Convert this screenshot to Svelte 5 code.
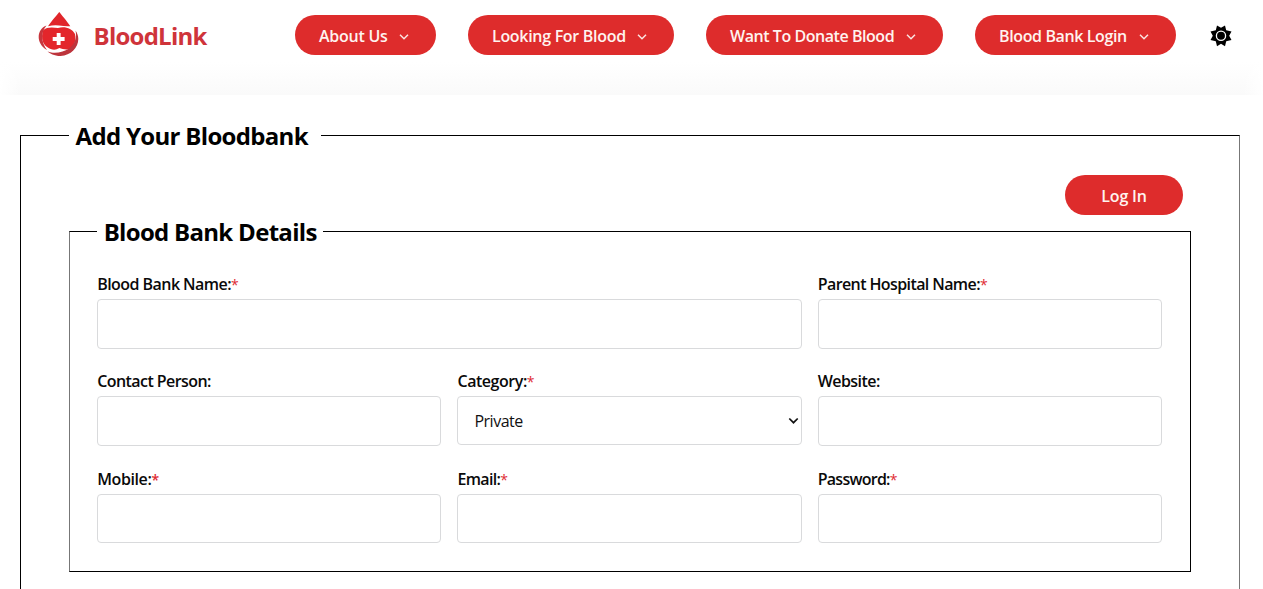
<script>
  const menus = [
    { label: 'About Us', width: 141, spacing: -0.25 },
    { label: 'Looking For Blood', width: 206, spacing: -0.3 },
    { label: 'Want To Donate Blood', width: 237, spacing: -0.45 },
    { label: 'Blood Bank Login', width: 200.5, spacing: -0.38 }
  ];

  const fields = [
    { id: 'name', label: 'Blood Bank Name:', required: true, wide: true, spacing: -0.55 },
    { id: 'hospital', label: 'Parent Hospital Name:', required: true, spacing: -0.6 },
    { id: 'contact', label: 'Contact Person:', spacing: -0.57 },
    { id: 'category', label: 'Category:', required: true, options: ['Private', 'Government'], spacing: -0.45 },
    { id: 'website', label: 'Website:', spacing: -0.55 },
    { id: 'mobile', label: 'Mobile:', required: true, boldMark: true, spacing: -0.4 },
    { id: 'email', label: 'Email:', required: true, spacing: -0.65 },
    { id: 'password', label: 'Password:', required: true, type: 'password', spacing: -0.75 }
  ];
</script>

<div class="page">
  <header>
    <div class="brand">
      <svg class="logo" width="42" height="46" viewBox="0 0 42 46">
        <path d="M21.300 0C19.500 2.500 13.500 9 10 14.200Q16 12.800 21 13.500Q27 14.500 32.300 14.200C29 9 23 2.500 21.300 0Z" fill="#e0262b" />
        <path d="M5 18.500C9 14.500 15 15.500 20 16C27 14 34 16.500 37 22C38.500 29 36 33.500 32.500 37C28 38 24 37 21.500 36L18 37.500C12.500 38.500 7 34.500 5 30C3.500 26 4 22 5 18.500Z" fill="#e3262b" />
        <path d="M8.500 13.500C-1 17-3 31 9 38C3.500 31 2 21 8.500 13.500Z" fill="#c7353c" />
        <path d="M37.500 18.500C45 29 36.500 43.500 22.500 44C16 44 12 41.500 9.500 39.500C15 41.500 19.500 41 24.500 39.500C33.500 37 40 29 37.500 18.500Z" fill="#bd343c" />
        <path d="M18.700 21h3.900v4h4v3.900h-4v4h-3.900v-4h-4V25h4z" fill="#fff" />
      </svg>
      <span class="brand-name">BloodLink</span>
    </div>
    <nav>
      {#each menus as menu}
        <button class="pill" style:width="{menu.width}px">
          <span style:letter-spacing="{menu.spacing}px">{menu.label}</span>
          <svg width="10" height="8" viewBox="0 0 10 8"><path d="M1 1.800 5 5.800 9 1.800" fill="none" stroke="#fbe5e2" stroke-width="1.500" /></svg>
        </button>
      {/each}
    </nav>
    <button class="theme" aria-label="Theme">
      <svg width="22" height="22" viewBox="0 0 22 22">
        <path d="M11 2.800 15 .5 16.200 5.300 21.500 6.500 19.200 10.700 21.500 15 16.200 16.200 15 21.200 11 18.800 7 21.200 5.800 16.200 .5 15 2.800 10.700 .5 6.500 5.800 5.300 7 .5Z" fill="#000" />
        <circle cx="11" cy="10.800" r="4.600" fill="#000" stroke="#fff" stroke-width="1.300" />
      </svg>
    </button>
  </header>

  <main>
    <fieldset class="outer">
      <legend>Add Your Bloodbank</legend>
      <div class="actions"><button class="pill login">Log In</button></div>
      <fieldset class="inner">
        <legend>Blood Bank Details</legend>
        <div class="grid">
          {#each fields as field}
            <div class="field" class:wide={field.wide}>
              <label for={field.id}><span class="text" style:letter-spacing="{field.spacing}px">{field.label}</span>{#if field.required}<span class="mark" class:bold={field.boldMark}>*</span>{/if}</label>
              {#if field.options}
                <div class="select">
                  <select id={field.id}>
                    {#each field.options as option}<option>{option}</option>{/each}
                  </select>
                  <svg width="11" height="8" viewBox="0 0 11 8"><path d="M1.300 1.500 5.500 5.700 9.700 1.500" fill="none" stroke="#111" stroke-width="1.700" /></svg>
                </div>
              {:else}
                <input id={field.id} type={field.type ?? 'text'} />
              {/if}
            </div>
          {/each}
        </div>
      </fieldset>
    </fieldset>
  </main>
</div>

<style>
  :global(body) {
    background: #fff;
    font-family: 'Open Sans', 'Noto Sans', sans-serif;
    color: #0a0a0a;
  }
  .page {
    display: flex;
    flex-direction: column;
    height: 589px;
    overflow: hidden;
  }
  header {
    display: flex;
    flex: none;
    height: 95px;
    box-sizing: border-box;
    padding: 0 29px 0 38px;
    background:
      linear-gradient(90deg, #fff, #fff0 20px, #fff0 calc(100% - 20px), #fff),
      linear-gradient(#fff 65%, #fafafa);
  }
  .brand {
    display: flex;
    width: 257px;
    flex: none;
  }
  .logo { margin-top: 12px; }
  .brand-name {
    margin: 19px 0 0 13.500px;
    font-size: 24px;
    line-height: 33px;
    font-weight: 700;
    letter-spacing: -0.75px;
    color: #cf343a;
  }
  nav {
    display: flex;
    gap: 32px;
    margin-top: 15px;
  }
  button {
    border: 0;
    font: inherit;
  }
  .pill {
    display: flex;
    flex: none;
    align-items: center;
    justify-content: space-between;
    height: 40px;
    padding: 1px 27px 0 24px;
    border-radius: 20px;
    background: #de2c2c;
    color: #fff3ef;
    font-size: 16px;
    font-weight: 600;
    line-height: 24px;
    white-space: nowrap;
  }
  .pill svg { margin-top: 3px; }
  .theme {
    margin: 25px 0 0 auto;
    padding: 0;
    width: 24px;
    height: 22px;
    background: none;
  }
  .theme svg { display: block; }
  main {
    flex: 1;
    min-height: 0;
    box-sizing: border-box;
    padding: 22px 23px 0 20px;
    overflow: hidden;
  }
  fieldset {
    margin: 0;
    min-width: 0;
    box-sizing: border-box;
    border: 1px solid #000;
  }
  legend {
    box-sizing: border-box;
    height: 36px;
    padding: 0 6.500px;
    font-size: 24px;
    font-weight: 700;
    line-height: 37px;
    white-space: nowrap;
    color: #000;
  }
  .outer {
    height: 473px;
    padding: 0 48px;
    border-right-color: #777;
    border-bottom: 0;
  }
  .outer > legend { width: 252px; letter-spacing: -0.68px; }
  .actions {
    display: flex;
    justify-content: flex-end;
    padding: 22px 8px 0 0;
    height: 60px;
    box-sizing: border-box;
  }
  .login {
    width: 118px;
    justify-content: center;
    padding: 1px 0 0;
    letter-spacing: -0.2px;
  }
  .inner {
    width: 1122px;
    height: 359px;
    padding: 0 28px 0 27.200px;
    border-left-color: #777;
  }
  .inner > legend { width: 226px; letter-spacing: -0.7px; }
  .grid {
    display: grid;
    grid-template-columns: repeat(3, 1fr);
    grid-auto-rows: 73.500px;
    column-gap: 16px;
    row-gap: 23.900px;
    padding-top: 26px;
  }
  .field { display: flex; flex-direction: column; }
  .wide { grid-column: span 2; }
  .field > label {
    height: 24px;
    font-size: 16px;
    line-height: 19px;
    white-space: nowrap;
  }
  .text { font-weight: 600; }
  .mark { color: #e02b32; font-size: 14px; }
  .bold { font-weight: 600; }
  input, select {
    width: 100%;
    height: 50px;
    box-sizing: border-box;
    border: 1px solid #d9dadc;
    border-radius: 4px;
    background: #fff;
    padding: 0 16px;
    outline: 0;
  }
  .select { display: flex; align-items: center; }
  select {
    appearance: none;
    height: 49px;
    padding: 1px 16px 0;
    color: #111;
    font: 400 16px 'Open Sans', 'Noto Sans', sans-serif;
    letter-spacing: -0.5px;
  }
  .select svg { flex: none; margin-left: -14px; margin-right: 3px; pointer-events: none; }
</style>
